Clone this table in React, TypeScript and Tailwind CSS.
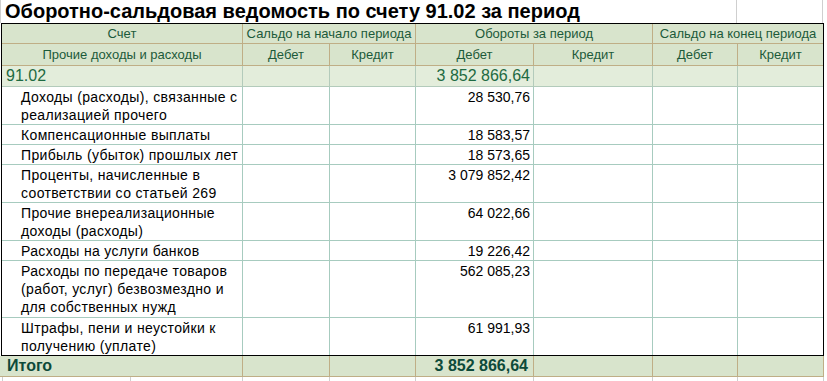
import React from "react";

type Row = {
  name: string[];
  turnover: string;
  h: string;
};

const rows: Row[] = [
  { name: ["Доходы (расходы), связанные с", "реализацией прочего"], turnover: "28 530,76", h: "h-[38px]" },
  { name: ["Компенсационные выплаты"], turnover: "18 583,57", h: "h-[20px]" },
  { name: ["Прибыль (убыток) прошлых лет"], turnover: "18 573,65", h: "h-[20px]" },
  { name: ["Проценты, начисленные в", "соответствии со статьей 269"], turnover: "3 079 852,42", h: "h-[38px]" },
  { name: ["Прочие внереализационные", "доходы (расходы)"], turnover: "64 022,66", h: "h-[38px]" },
  { name: ["Расходы на услуги банков"], turnover: "19 226,42", h: "h-[20px]" },
  { name: ["Расходы по передаче товаров", "(работ, услуг) безвозмездно и", "для собственных нужд"], turnover: "562 085,23", h: "h-[57px]" },
  { name: ["Штрафы, пени и неустойки к", "получению (уплате)"], turnover: "61 991,93", h: "h-[37px]" },
];

const cols = "grid grid-cols-[241px_87px_86px_118px_119px_85px_85px]";

export default function App() {
  return (
    <div className="w-[827px] h-[381px] overflow-hidden bg-white font-['Liberation_Sans',Arial,sans-serif] text-black">
      {/* Title line with sheet gridlines */}
      <div className="relative h-[23px] flex">
        <div className="w-[1px] h-full bg-[#cfcfcf]" />
        <div className="w-[736px] h-full border-r border-[#cfcfcf]" />
        <div className="w-[86px] h-full border-r border-[#cfcfcf]" />
        <div className="absolute left-[5px] top-0 whitespace-nowrap text-[20px] font-bold leading-[23px]">
          Оборотно-сальдовая ведомость по счету 91.02 за период
        </div>
      </div>

      {/* Framed report */}
      <div className="ml-[1px] w-[823px] border border-black">
        {/* Header row 1 */}
        <div className={`${cols} bg-[#d8e4cc] text-[13px] text-[#1c5a3a] leading-[19px] text-center`}>
          <div className="h-[20px] border-r border-b border-[#bfae86]">Счет</div>
          <div className="col-span-2 h-[20px] border-r border-b border-[#bfae86]">Сальдо на начало периода</div>
          <div className="col-span-2 h-[20px] border-r border-b border-[#bfae86]">Обороты за период</div>
          <div className="col-span-2 h-[20px] border-b border-[#bfae86]">Сальдо на конец периода</div>
        </div>
        {/* Header row 2 */}
        <div className={`${cols} bg-[#d8e4cc] text-[13px] text-[#1c5a3a] leading-[21px] text-center`}>
          <div className="h-[22px] border-r border-b border-[#bfae86]">Прочие доходы и расходы</div>
          <div className="h-[22px] border-r border-b border-[#bfae86]">Дебет</div>
          <div className="h-[22px] border-r border-b border-[#bfae86]">Кредит</div>
          <div className="h-[22px] border-r border-b border-[#bfae86]">Дебет</div>
          <div className="h-[22px] border-r border-b border-[#bfae86]">Кредит</div>
          <div className="h-[22px] border-r border-b border-[#bfae86]">Дебет</div>
          <div className="h-[22px] border-b border-[#bfae86]">Кредит</div>
        </div>
        {/* Account row */}
        <div className={`${cols} bg-[#e3eddb] text-[16px] text-[#1e6a42] leading-[20px]`}>
          <div className="h-[21px] pl-[4px] border-r border-b border-[#b3cbbb]">91.02</div>
          <div className="h-[21px] border-r border-b border-[#b3cbbb]" />
          <div className="h-[21px] border-r border-b border-[#b3cbbb]" />
          <div className="h-[21px] pr-[3px] text-right border-r border-b border-[#b3cbbb]">3 852 866,64</div>
          <div className="h-[21px] border-r border-b border-[#b3cbbb]" />
          <div className="h-[21px] border-r border-b border-[#b3cbbb]" />
          <div className="h-[21px] border-b border-[#b3cbbb]" />
        </div>
        {/* Sub-accounts */}
        {rows.map((r, i) => {
          const last = i === rows.length - 1;
          const b = last ? "border-r border-[#a7cbbf]" : "border-r border-b border-[#a7cbbf]";
          return (
            <div key={i} className={`${cols} text-[14px] leading-[18px]`}>
              <div className={`${r.h} pl-[19px] pt-[1px] whitespace-nowrap tracking-[0.35px] ${b}`}>
                {r.name.map((line, j) => (
                  <div key={j}>{line}</div>
                ))}
              </div>
              <div className={`${r.h} ${b}`} />
              <div className={`${r.h} ${b}`} />
              <div className={`${r.h} pr-[3px] pt-[1px] text-right ${b}`}>{r.turnover}</div>
              <div className={`${r.h} ${b}`} />
              <div className={`${r.h} ${b}`} />
              <div className={`${r.h} ${last ? "" : "border-b border-[#a7cbbf]"}`} />
            </div>
          );
        })}
      </div>

      {/* Total row */}
      <div className="grid grid-cols-[243px_87px_86px_118px_119px_85px_86px] w-[824px] bg-[#d8e4cc] text-[16px] font-bold text-[#0d4a3a] leading-[20px]">
        <div className="h-[21px] pl-[7px] border-r border-b border-[#bfae86]">Итого</div>
        <div className="h-[21px] border-r border-b border-[#bfae86]" />
        <div className="h-[21px] border-r border-b border-[#bfae86]" />
        <div className="h-[21px] pr-[5px] text-right border-r border-b border-[#bfae86]">3 852 866,64</div>
        <div className="h-[21px] border-r border-b border-[#bfae86]" />
        <div className="h-[21px] border-r border-b border-[#bfae86]" />
        <div className="h-[21px] border-r border-b border-[#bfae86]" />
      </div>

      {/* Sheet gridlines below */}
      <div className="flex h-[5px]">
        <div className="w-[3px] border-r border-[#cfcfcf]" />
        <div className="w-[128px] border-r border-[#cfcfcf]" />
        <div className="w-[112px] border-r border-[#cfcfcf]" />
        <div className="w-[87px] border-r border-[#cfcfcf]" />
        <div className="w-[86px] border-r border-[#cfcfcf]" />
        <div className="w-[118px] border-r border-[#cfcfcf]" />
        <div className="w-[119px] border-r border-[#cfcfcf]" />
        <div className="w-[85px] border-r border-[#cfcfcf]" />
        <div className="w-[86px] border-r border-[#cfcfcf]" />
      </div>
    </div>
  );
}
